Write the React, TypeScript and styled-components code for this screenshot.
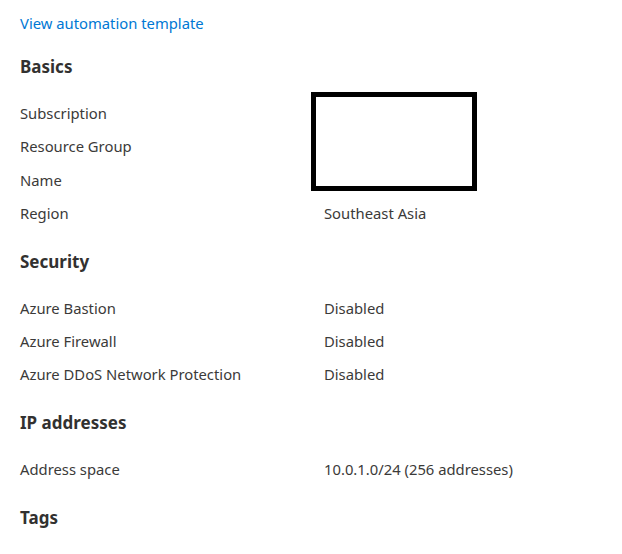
import React from 'react';
import styled, { createGlobalStyle } from 'styled-components';

const GlobalStyle = createGlobalStyle`
  html, body {
    margin: 0;
    padding: 0;
    background: #fff;
  }
  body {
    font-family: "Noto Sans", "Open Sans", "Liberation Sans", sans-serif;
    color: #323130;
  }
`;

const Page = styled.div`
  position: relative;
  width: 622px;
  height: 554px;
  padding: 13px 0 0 20px;
  box-sizing: border-box;
  overflow: hidden;
`;

const TemplateLink = styled.a`
  display: block;
  font-size: 14.8px;
  line-height: 20px;
  color: #0078d4;
  text-decoration: none;
  margin-bottom: 22px;
  cursor: pointer;
`;

const Section = styled.section`
  margin-bottom: 20px;
`;

const SectionTitle = styled.h2`
  margin: 0 0 17.5px;
  font-size: 17px;
  line-height: 24px;
  font-weight: 700;
  color: #323130;
`;

const Row = styled.div`
  display: grid;
  grid-template-columns: 304px 1fr;
  height: 33.3px;
  align-items: center;
  font-size: 14.8px;
  line-height: 20px;
`;

const Label = styled.span`
  color: #3b3a39;
`;

const Value = styled.span`
  color: #3b3a39;
`;

const Redaction = styled.div`
  position: absolute;
  left: 311px;
  top: 92px;
  width: 166px;
  height: 99px;
  box-sizing: border-box;
  border: 5px solid #000;
  background: #fff;
`;

type Item = { label: string; value?: string };

const sections: { title: string; items: Item[] }[] = [
  {
    title: 'Basics',
    items: [
      { label: 'Subscription' },
      { label: 'Resource Group' },
      { label: 'Name' },
      { label: 'Region', value: 'Southeast Asia' },
    ],
  },
  {
    title: 'Security',
    items: [
      { label: 'Azure Bastion', value: 'Disabled' },
      { label: 'Azure Firewall', value: 'Disabled' },
      { label: 'Azure DDoS Network Protection', value: 'Disabled' },
    ],
  },
  {
    title: 'IP addresses',
    items: [{ label: 'Address space', value: '10.0.1.0/24 (256 addresses)' }],
  },
  { title: 'Tags', items: [] },
];

export default function App() {
  return (
    <>
      <GlobalStyle />
      <Page>
        <TemplateLink>View automation template</TemplateLink>
        {sections.map((s) => (
          <Section key={s.title}>
            <SectionTitle>{s.title}</SectionTitle>
            {s.items.map((it) => (
              <Row key={it.label}>
                <Label>{it.label}</Label>
                <Value>{it.value ?? ''}</Value>
              </Row>
            ))}
          </Section>
        ))}
        <Redaction />
      </Page>
    </>
  );
}
